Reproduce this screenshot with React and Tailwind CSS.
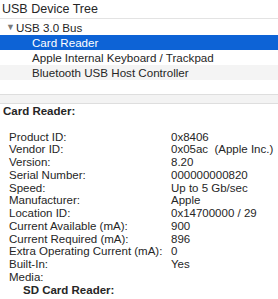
const rows = [
  ['Product ID:', '0x8406'],
  ['Vendor ID:', '0x05ac  (Apple Inc.)'],
  ['Version:', '8.20'],
  ['Serial Number:', '000000000820'],
  ['Speed:', 'Up to 5 Gb/sec'],
  ['Manufacturer:', 'Apple'],
  ['Location ID:', '0x14700000 / 29'],
  ['Current Available (mA):', '900'],
  ['Current Required (mA):', '896'],
  ['Extra Operating Current (mA):', '0'],
  ['Built-In:', 'Yes'],
];

const App = () => {
  return (
    <div className="w-[278px] h-[299px] overflow-hidden bg-white text-[#262626] font-['Liberation_Sans',Arial,sans-serif]">
      <div className="h-[19px] px-[2px] pt-[2px] text-[12.5px] leading-[14px] border-b border-[#e3e3e3]">USB Device Tree</div>
      <div className="pt-[1px] text-[11.6px]">
        <div className="h-[15px] flex items-center pl-[6px]">
          <span className="text-[9px] text-[#7a7a7a] mr-[1px] leading-none">▼</span>
          <span>USB 3.0 Bus</span>
        </div>
        <div className="h-[15px] flex items-center pl-[32px] bg-[#0d63d6] text-white">Card Reader</div>
        <div className="h-[15px] flex items-center pl-[32px]">Apple Internal Keyboard / Trackpad</div>
        <div className="h-[15px] flex items-center pl-[32px] bg-[#f4f4f4]">Bluetooth USB Host Controller</div>
        <div className="h-[14px]"></div>
      </div>
      <div className="h-[10px] bg-[#f3f3f3] border-y border-[#dedede]"></div>
      <div className="pt-[1px] text-[11.5px] leading-[12.75px]">
        <div className="pl-[3px] font-bold">Card Reader:</div>
        <div className="h-[12.75px]"></div>
        {rows.map(([k, v]) => (
          <div key={k} className="flex">
            <span className="pl-[9px] w-[171px] shrink-0 whitespace-nowrap">{k}</span>
            <span className="whitespace-pre">{v}</span>
          </div>
        ))}
        <div className="pl-[9px]">Media:</div>
        <div className="pl-[23px] font-bold">SD Card Reader:</div>
      </div>
    </div>
  );
};

export default App;
